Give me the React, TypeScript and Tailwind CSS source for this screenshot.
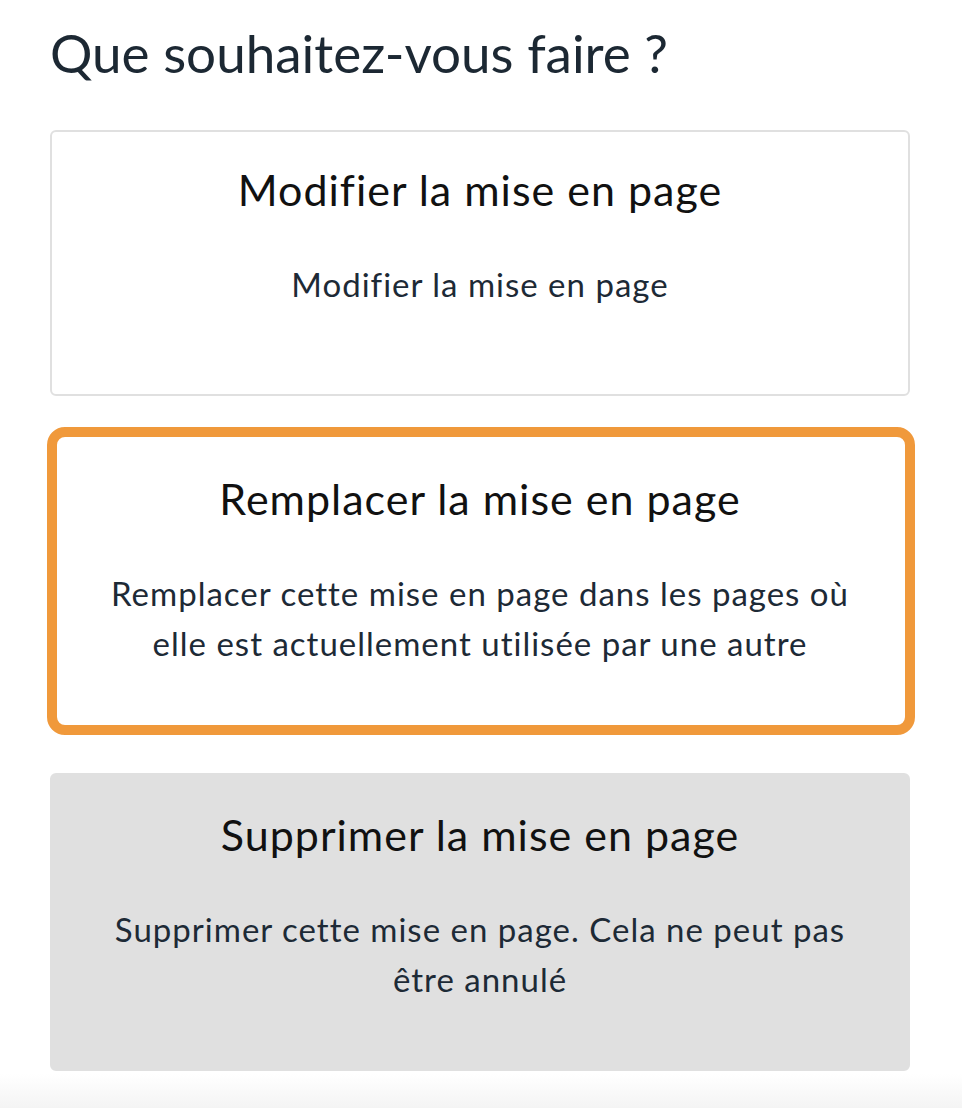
import React from 'react';

interface OptionCardProps {
  title: string;
  description: string;
  variant?: 'default' | 'focused' | 'disabled';
  className?: string;
}

const font = { fontFamily: 'Lato, "Noto Sans", sans-serif' };

const OptionCard: React.FC<OptionCardProps> = ({ title, description, variant = 'default', className = '' }) => {
  const variantClasses = {
    default: 'bg-white border-2 border-[#e0e0e0]',
    focused: 'bg-white border-2 border-[#e0e0e0]',
    disabled: 'bg-[#e0e0e0] border-2 border-[#e0e0e0]'
  };

  return (
    <div className={`relative rounded-[6px] text-center ${variantClasses[variant]} ${className}`}>
      <div className="text-[43px] leading-[50px] tracking-[1px] text-[#111111]">{title}</div>
      <div className="mt-[44px] text-[33px] leading-[50px] tracking-[1px] text-[#1d2a36]">{description}</div>
      {variant === 'focused' && (
        <div className="pointer-events-none absolute -left-[5px] -right-[7px] -top-[6px] -bottom-[6px] rounded-[18px] border-[10px] border-[#f0993b]" />
      )}
    </div>
  );
};

export default function App() {
  return (
    <div className="relative min-h-[1108px] w-[962px] overflow-hidden bg-white pl-[50px] pr-[52px]" style={font}>
      <h1 className="pt-[21px] text-[53px] leading-[64px] text-[#1c2833]">Que souhaitez-vous faire ?</h1>

      <OptionCard
        className="mt-[45px] h-[266px] pt-[33px]"
        title="Modifier la mise en page"
        description="Modifier la mise en page"
      />
      <OptionCard
        className="mt-[35px] h-[300px] px-[50px] pt-[41px]"
        variant="focused"
        title="Remplacer la mise en page"
        description="Remplacer cette mise en page dans les pages où elle est actuellement utilisée par une autre"
      />
      <OptionCard
        className="mt-[42px] h-[298px] px-[50px] pt-[35px]"
        variant="disabled"
        title="Supprimer la mise en page"
        description="Supprimer cette mise en page. Cela ne peut pas être annulé"
      />

      <div className="absolute bottom-0 left-0 right-0 h-[34px] bg-gradient-to-b from-white to-[#f4f4f4]" />
    </div>
  );
}
